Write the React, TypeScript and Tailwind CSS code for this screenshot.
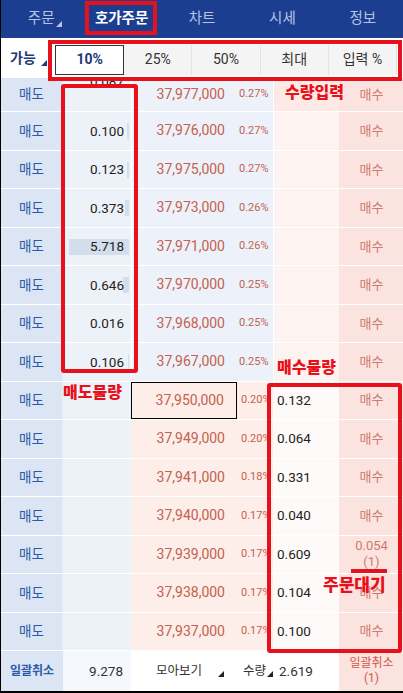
import React from 'react'

const font = { fontFamily: 'Roboto, "Noto Sans CJK KR", sans-serif' }

const tabs = ['주문', '호가주문', '차트', '시세', '정보']
const ratios = ['10%', '25%', '50%', '최대', '입력 %']

const asks = [
  { price: '37,977,000', pct: '0.27%', qty: '0.087', bar: 0 },
  { price: '37,976,000', pct: '0.27%', qty: '0.100', bar: 2 },
  { price: '37,975,000', pct: '0.27%', qty: '0.123', bar: 2 },
  { price: '37,973,000', pct: '0.26%', qty: '0.373', bar: 4 },
  { price: '37,971,000', pct: '0.26%', qty: '5.718', bar: 60 },
  { price: '37,970,000', pct: '0.25%', qty: '0.646', bar: 6 },
  { price: '37,968,000', pct: '0.25%', qty: '0.016', bar: 0 },
  { price: '37,967,000', pct: '0.25%', qty: '0.106', bar: 1 },
]

const bids = [
  { price: '37,950,000', pct: '0.20%', qty: '0.132' },
  { price: '37,949,000', pct: '0.20%', qty: '0.064' },
  { price: '37,941,000', pct: '0.18%', qty: '0.331' },
  { price: '37,940,000', pct: '0.17%', qty: '0.040' },
  { price: '37,939,000', pct: '0.17%', qty: '0.609', wait: true },
  { price: '37,938,000', pct: '0.17%', qty: '0.104' },
  { price: '37,937,000', pct: '0.17%', qty: '0.100' },
]

function Tri({ color }: { color: string }) {
  return <span className={`inline-block w-0 h-0 border-l-[6px] border-l-transparent border-b-[6px] ${color}`} />
}

function AskRow({ r, first }: { r: (typeof asks)[0]; first?: boolean }) {
  return (
    <div className={`grid grid-cols-[62px_68px_106px_36px_66px_65px] ${first ? 'h-[34px]' : 'h-[38.5px]'} border-b border-white`}>
      <div className="flex items-center justify-center bg-[#dbe5f3] text-[13.5px] text-[#2b5aa6] border-r border-[#e8eef7]">매도</div>
      <div className="relative flex items-center justify-end pr-[7px] bg-[#edf2f9] overflow-hidden">
        {r.bar > 0 && (
          <div className="absolute right-[2px] top-[11px] h-[16px] bg-[#d3deec]" style={{ width: r.bar }} />
        )}
        <span className={`relative text-[13.5px] text-[#222] ${first ? '-mt-[26px]' : ''}`}>{r.qty}</span>
      </div>
      <div className="flex items-center justify-end pr-[12px] bg-[#edf2fa] text-[14px] text-[#c4614f] border-l border-white">{r.price}</div>
      <div className="flex items-center pl-[2px] bg-[#edf2fa] text-[11px] text-[#c4614f]">{r.pct}</div>
      <div className={`${first ? 'bg-[#fde9e5]' : 'bg-[#fdf4f2]'} border-l border-white`} />
      <div className="flex items-center justify-center bg-[#fbe4df] text-[13px] text-[#cf7a70]">매수</div>
    </div>
  )
}

function BidRow({ r, sel }: { r: (typeof bids)[0]; sel?: boolean }) {
  return (
    <div className="grid grid-cols-[62px_68px_106px_36px_66px_65px] h-[38.5px] border-b border-white">
      <div className="flex items-center justify-center bg-[#dbe5f3] text-[13.5px] text-[#2b5aa6] border-r border-[#e8eef7]">매도</div>
      <div className="bg-[#edf2f9]" />
      <div className={`flex items-center justify-end pr-[12px] bg-[#fdeee9] text-[14px] text-[#c4614f] ${sel ? 'border border-black' : ''}`}>{r.price}</div>
      <div className="flex items-center pl-[4px] bg-[#fdeee9] text-[11px] text-[#c4614f] overflow-hidden whitespace-nowrap">{r.pct}</div>
      <div className="flex items-start pt-[8px] pl-[4px] bg-[#fffafa] text-[13.5px] text-[#222]">{r.qty}</div>
      <div className="flex flex-col items-center justify-center bg-[#fbe4df] text-[13px] text-[#cf7a70] leading-[16px]">
        {r.wait ? (
          <>
            <span>0.054</span>
            <span>(1)</span>
          </>
        ) : (
          '매수'
        )}
      </div>
    </div>
  )
}

export default function App() {
  return (
    <div className="relative w-[403px] h-[693px] overflow-hidden bg-white border-l border-b-2 border-black" style={font}>
      {/* top tabs */}
      <div className="grid grid-cols-5 h-[38px] bg-[#1c3e91]">
        {tabs.map((t, i) => (
          <div key={t} className="relative flex items-center justify-center">
            <span className={i === 1 ? 'text-[14.5px] font-bold text-white' : 'text-[14.5px] text-[#b7c4e2]'}>{t}</span>
            {i === 0 && (
              <span className="absolute left-[55px] bottom-[4px]">
                <Tri color="border-b-[#b7c4e2]" />
              </span>
            )}
          </div>
        ))}
      </div>

      {/* ratio row */}
      <div className="flex items-center h-[40px] bg-white">
        <div className="relative w-[54px] h-full flex items-center pl-[9px]">
          <span className="text-[14px] font-bold text-[#1f3a7a]">가능</span>
          <span className="absolute left-[40px] bottom-[5px]">
            <Tri color="border-b-[#1f3a7a]" />
          </span>
        </div>
        <div className="flex h-[30px] w-[342px] mt-[3px]">
          {ratios.map((r, i) => (
            <div
              key={r}
              className={
                i === 0
                  ? 'flex-1 flex items-center justify-center bg-white border border-[#333] text-[14px] font-bold text-[#1f3a7a]'
                  : 'flex-1 flex items-center justify-center bg-[#f4f4f4] border-r border-[#e2e2e2] text-[14px] text-[#333]'
              }
            >
              {r}
            </div>
          ))}
        </div>
      </div>

      {/* order book */}
      <div className="flex flex-col">
        {asks.map((r, i) => (
          <AskRow key={r.price} r={r} first={i === 0} />
        ))}
        {bids.map((r, i) => (
          <BidRow key={r.price} r={r} sel={i === 0} />
        ))}
      </div>

      {/* footer */}
      <div className="grid grid-cols-[62px_68px_106px_36px_66px_65px] h-[40px]">
        <div className="flex items-center justify-center bg-[#dbe5f3] text-[12px] font-bold text-[#2b5aa6]">일괄취소</div>
        <div className="flex items-center justify-end pr-[8px] bg-[#f5f8fc] text-[13.5px] text-[#333]">9.278</div>
        <div className="relative flex items-center pl-[25px] bg-white text-[12.5px] text-[#333]">
          모아보기
          <span className="absolute left-[87px] bottom-[8px]">
            <Tri color="border-b-[#222]" />
          </span>
        </div>
        <div className="relative flex items-center pl-[6px] bg-white text-[12.5px] text-[#333]">
          수량
          <span className="absolute left-[30px] bottom-[8px]">
            <Tri color="border-b-[#222]" />
          </span>
        </div>
        <div className="flex items-center pl-[6px] bg-white text-[13.5px] text-[#333]">2.619</div>
        <div className="flex flex-col items-center justify-center bg-[#fbe4df] text-[12px] text-[#d2564a] leading-[15px]">
          <span>일괄취소</span>
          <span>(1)</span>
        </div>
      </div>

      {/* annotations */}
      <div className="absolute left-[84px] top-[1px] w-[72px] h-[34px] border-[4px] border-[#e8101a]" />
      <div className="absolute left-[47px] top-[40px] w-[354px] h-[41px] border-[4px] border-[#e8101a]" />
      <div className="absolute left-[60px] top-[84px] w-[77px] h-[289px] border-[4px] border-[#e8101a] rounded-[3px]" />
      <div className="absolute left-[266px] top-[383px] w-[135px] h-[270px] border-[4px] border-[#e8101a] rounded-[3px]" />
      <div className="absolute left-[284px] top-[81px] text-[16px] font-black text-[#e8101a]">수량입력</div>
      <div className="absolute left-[62px] top-[381px] text-[16px] font-black text-[#e8101a]">매도물량</div>
      <div className="absolute left-[276px] top-[356px] text-[16px] font-black text-[#e8101a]">매수물량</div>
      <div className="absolute left-[350px] top-[569px] w-[36px] h-[4px] bg-[#e8101a]" />
      <div className="absolute left-[322px] top-[573px] text-[17px] font-black text-[#e8101a]">주문대기</div>
    </div>
  )
}
